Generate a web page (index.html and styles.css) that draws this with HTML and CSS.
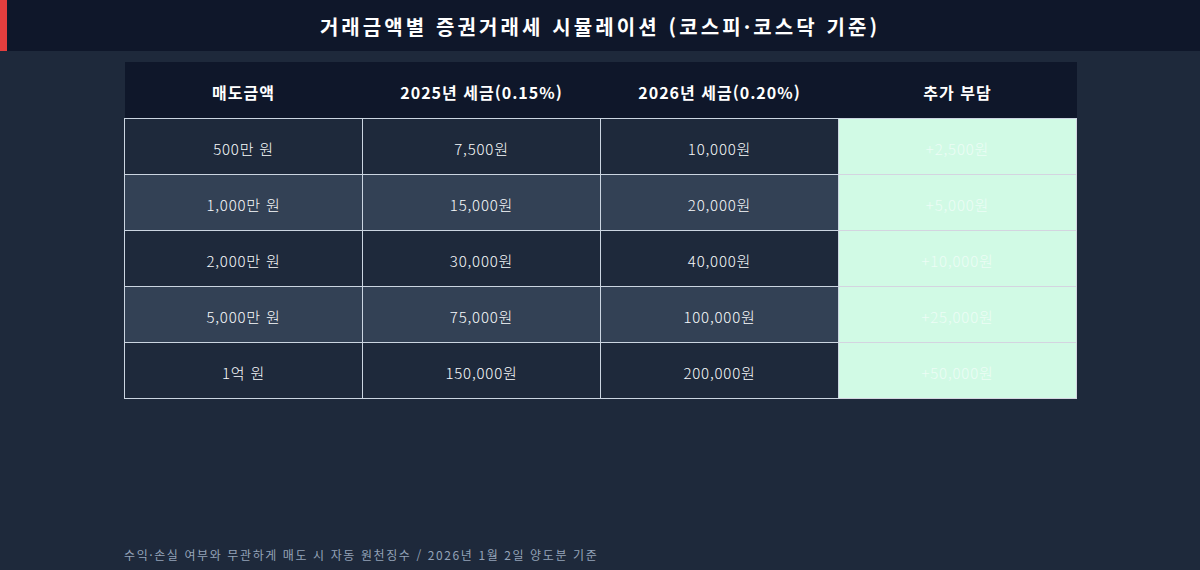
FILE: index.html
```html
<!DOCTYPE html>
<html lang="ko">
<head>
<meta charset="utf-8">
<link rel="stylesheet" href="styles.css">
</head>
<body>
<div class="page">
  <header class="topbar">
    <h1 class="title">거래금액별 증권거래세 시뮬레이션 (코스피·코스닥 기준)</h1>
  </header>
  <main class="content">
    <table class="tax-table">
      <thead>
        <tr>
          <th>매도금액</th>
          <th>2025년 세금(0.15%)</th>
          <th>2026년 세금(0.20%)</th>
          <th>추가 부담</th>
        </tr>
      </thead>
      <tbody>
        <tr class="odd"><td>500만 원</td><td>7,500원</td><td>10,000원</td><td class="extra">+2,500원</td></tr>
        <tr class="even"><td>1,000만 원</td><td>15,000원</td><td>20,000원</td><td class="extra">+5,000원</td></tr>
        <tr class="odd"><td>2,000만 원</td><td>30,000원</td><td>40,000원</td><td class="extra">+10,000원</td></tr>
        <tr class="even"><td>5,000만 원</td><td>75,000원</td><td>100,000원</td><td class="extra">+25,000원</td></tr>
        <tr class="odd"><td>1억 원</td><td>150,000원</td><td>200,000원</td><td class="extra">+50,000원</td></tr>
      </tbody>
    </table>
  </main>
  <footer class="note">수익·손실 여부와 무관하게 매도 시 자동 원천징수 / 2026년 1월 2일 양도분 기준</footer>
</div>
</body>
</html>
```

FILE: styles.css
```css
* { box-sizing: border-box; }
html, body {
  margin: 0;
  padding: 0;
  width: 1200px;
  height: 570px;
  overflow: hidden;
  background: #1e293b;
  font-family: "Noto Sans CJK KR", "Noto Sans", sans-serif;
  color: #f1f5f9;
}
.page {
  display: flex;
  flex-direction: column;
  height: 570px;
}
.topbar {
  height: 51px;
  background: #0f172a;
  border-left: 7px solid #e53e3e;
  display: flex;
  align-items: center;
  justify-content: center;
  padding: 2px 7px 0 0;
}
.title {
  margin: 0;
  font-size: 20px;
  font-weight: 700;
  color: #ffffff;
  letter-spacing: 3.1px;
}
.content {
  padding: 11px 123px 0 124px;
}
.tax-table {
  width: 953px;
  border-collapse: collapse;
  table-layout: fixed;
}
.tax-table th {
  height: 56px;
  background: #0f172a;
  color: #ffffff;
  font-size: 16px;
  font-weight: 700;
  letter-spacing: 1px;
  text-align: center;
  padding: 5px 0 0;
  border-bottom: 1px solid #cbd5e1;
}
.tax-table td {
  height: 56px;
  border: 1px solid #cbd5e1;
  text-align: center;
  font-size: 15px;
  font-weight: 300;
  letter-spacing: 0.8px;
  color: #f8fafc;
  padding: 5px 0 0;
}
.tax-table tr.odd td { background: #1e293b; }
.tax-table tr.even td { background: #334155; }
.tax-table tr td.extra {
  background: #d1fae5;
  color: #ecfdf5;
  border-color: #d4d4e0;
}
.note {
  margin-top: auto;
  padding: 0 0 7px 124px;
  font-size: 12px;
  letter-spacing: 1.6px;
  color: #94a3b8;
}
```
